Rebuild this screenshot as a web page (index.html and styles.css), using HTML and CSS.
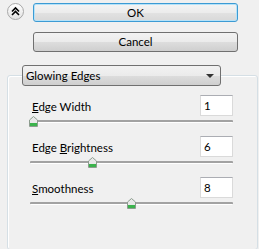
FILE: index.html
```html
<!DOCTYPE html>
<html>
<head>
<meta charset="UTF-8">
<title>Glowing Edges</title>
<link rel="stylesheet" href="styles.css">
</head>
<body>
	<div class="top">
		<div class="collapse">
			<svg width="15" height="15" viewBox="0 0 15 15">
				<path d="M4 7.5 L7.5 4 L11 7.5 M4 11 L7.5 7.5 L11 11" fill="none" stroke="#000" stroke-width="1.6"/>
			</svg>
		</div>
		<div class="buttons">
			<button class="btn btn-default">OK</button>
			<button class="btn">Cancel</button>
		</div>
	</div>
	<fieldset class="group">
		<legend class="combo">
			<span>Glowing Edges</span>
			<span class="arrow"></span>
		</legend>
		<div class="param">
			<div class="param-head">
				<label><u>E</u>dge Width</label>
				<div class="num">1</div>
			</div>
			<div class="slider">
				<div class="track"></div>
				<svg class="thumb" style="left: 0px" width="9" height="11" viewBox="0 0 9 11">
					<path d="M0.5 10.5 V4 L4.5 0.5 L8.5 4 V10.5 Z" fill="#e8e8e8" stroke="#8c9c8e"/>
					<rect x="1" y="7" width="7" height="3" fill="#3bb34c"/>
				</svg>
			</div>
		</div>
		<div class="param">
			<div class="param-head">
				<label>Edge <u>B</u>rightness</label>
				<div class="num">6</div>
			</div>
			<div class="slider">
				<div class="track"></div>
				<svg class="thumb" style="left: 59px" width="9" height="11" viewBox="0 0 9 11">
					<path d="M0.5 10.5 V4 L4.5 0.5 L8.5 4 V10.5 Z" fill="#e8e8e8" stroke="#8c9c8e"/>
					<rect x="1" y="7" width="7" height="3" fill="#3bb34c"/>
				</svg>
			</div>
		</div>
		<div class="param">
			<div class="param-head">
				<label><u>S</u>moothness</label>
				<div class="num">8</div>
			</div>
			<div class="slider">
				<div class="track"></div>
				<svg class="thumb" style="left: 98px" width="9" height="11" viewBox="0 0 9 11">
					<path d="M0.5 10.5 V4 L4.5 0.5 L8.5 4 V10.5 Z" fill="#e8e8e8" stroke="#8c9c8e"/>
					<rect x="1" y="7" width="7" height="3" fill="#3bb34c"/>
				</svg>
			</div>
		</div>
	</fieldset>
</body>
</html>
```

FILE: styles.css
```css
body {
	margin: 0;
	background: #f0f0f0;
	font-family: Lato, "Liberation Sans", sans-serif;
	font-size: 11.5px;
	color: #000;
}
.top {
	display: flex;
	padding: 3px 0 0 7px;
	gap: 9px;
}
.collapse {
	width: 17px;
	height: 17px;
	box-sizing: border-box;
	border: 1px solid #a8a8a8;
	border-radius: 50%;
	background: linear-gradient(to bottom, #ffffff 0%, #e2e2e2 100%);
	display: flex;
	align-items: center;
	justify-content: center;
}
.collapse svg {
	display: block;
}
.buttons {
	display: flex;
	flex-direction: column;
	gap: 10px;
	width: 205px;
}
.btn {
	height: 20px;
	box-sizing: border-box;
	border: 1px solid #707070;
	border-radius: 3px;
	background: linear-gradient(to bottom, #f2f2f2 0%, #ebebeb 50%, #dddddd 51%, #cfcfcf 100%);
	font-family: inherit;
	font-size: 11.5px;
	padding: 0;
	line-height: 16px;
}
.btn-default {
	height: 19px;
	border-color: #3c9bd4;
	box-shadow: inset 0 0 0 1px #b6e2f8;
	background: linear-gradient(to bottom, #f4f4f4 0%, #ececec 50%, #e2e2e2 51%, #d8d8d8 100%);
}
.group {
	margin: 13px 0 0 7px;
	padding: 0 0 40px 0;
	width: 251px;
	box-sizing: border-box;
	border: 1px solid #d5dfe5;
	border-radius: 3px;
	box-shadow: inset 1px 1px 0 #fff;
}
.combo {
	margin-left: 14px;
	padding: 0 0 0 3px;
	width: 199px;
	height: 21px;
	box-sizing: border-box;
	border: 1px solid #707070;
	border-radius: 3px;
	background: linear-gradient(to bottom, #f2f2f2 0%, #ebebeb 50%, #dddddd 51%, #cfcfcf 100%);
	display: flex;
	align-items: center;
	justify-content: space-between;
	line-height: 19px;
}
.arrow {
	width: 0;
	height: 0;
	margin-right: 6px;
	border-left: 4px solid transparent;
	border-right: 4px solid transparent;
	border-top: 4px solid #333;
}
.param {
	margin: 9px 0 0 21px;
	width: 204px;
}
.param-head {
	display: flex;
	justify-content: space-between;
	align-items: center;
	height: 21px;
}
.param-head label {
	padding-left: 3px;
	padding-top: 1px;
}
.num {
	width: 33px;
	height: 21px;
	box-sizing: border-box;
	border: 1px solid #dadada;
	border-top-color: #abadb3;
	background: #fff;
	padding-left: 3px;
	line-height: 19px;
}
.slider {
	position: relative;
	height: 11px;
}
.track {
	position: absolute;
	left: 1px;
	right: 0;
	top: 4px;
	height: 2px;
	background: #a2a2a2;
	border-bottom: 1px solid #fff;
	border-radius: 1px;
}
.thumb {
	position: absolute;
	top: 0;
	display: block;
}
```
